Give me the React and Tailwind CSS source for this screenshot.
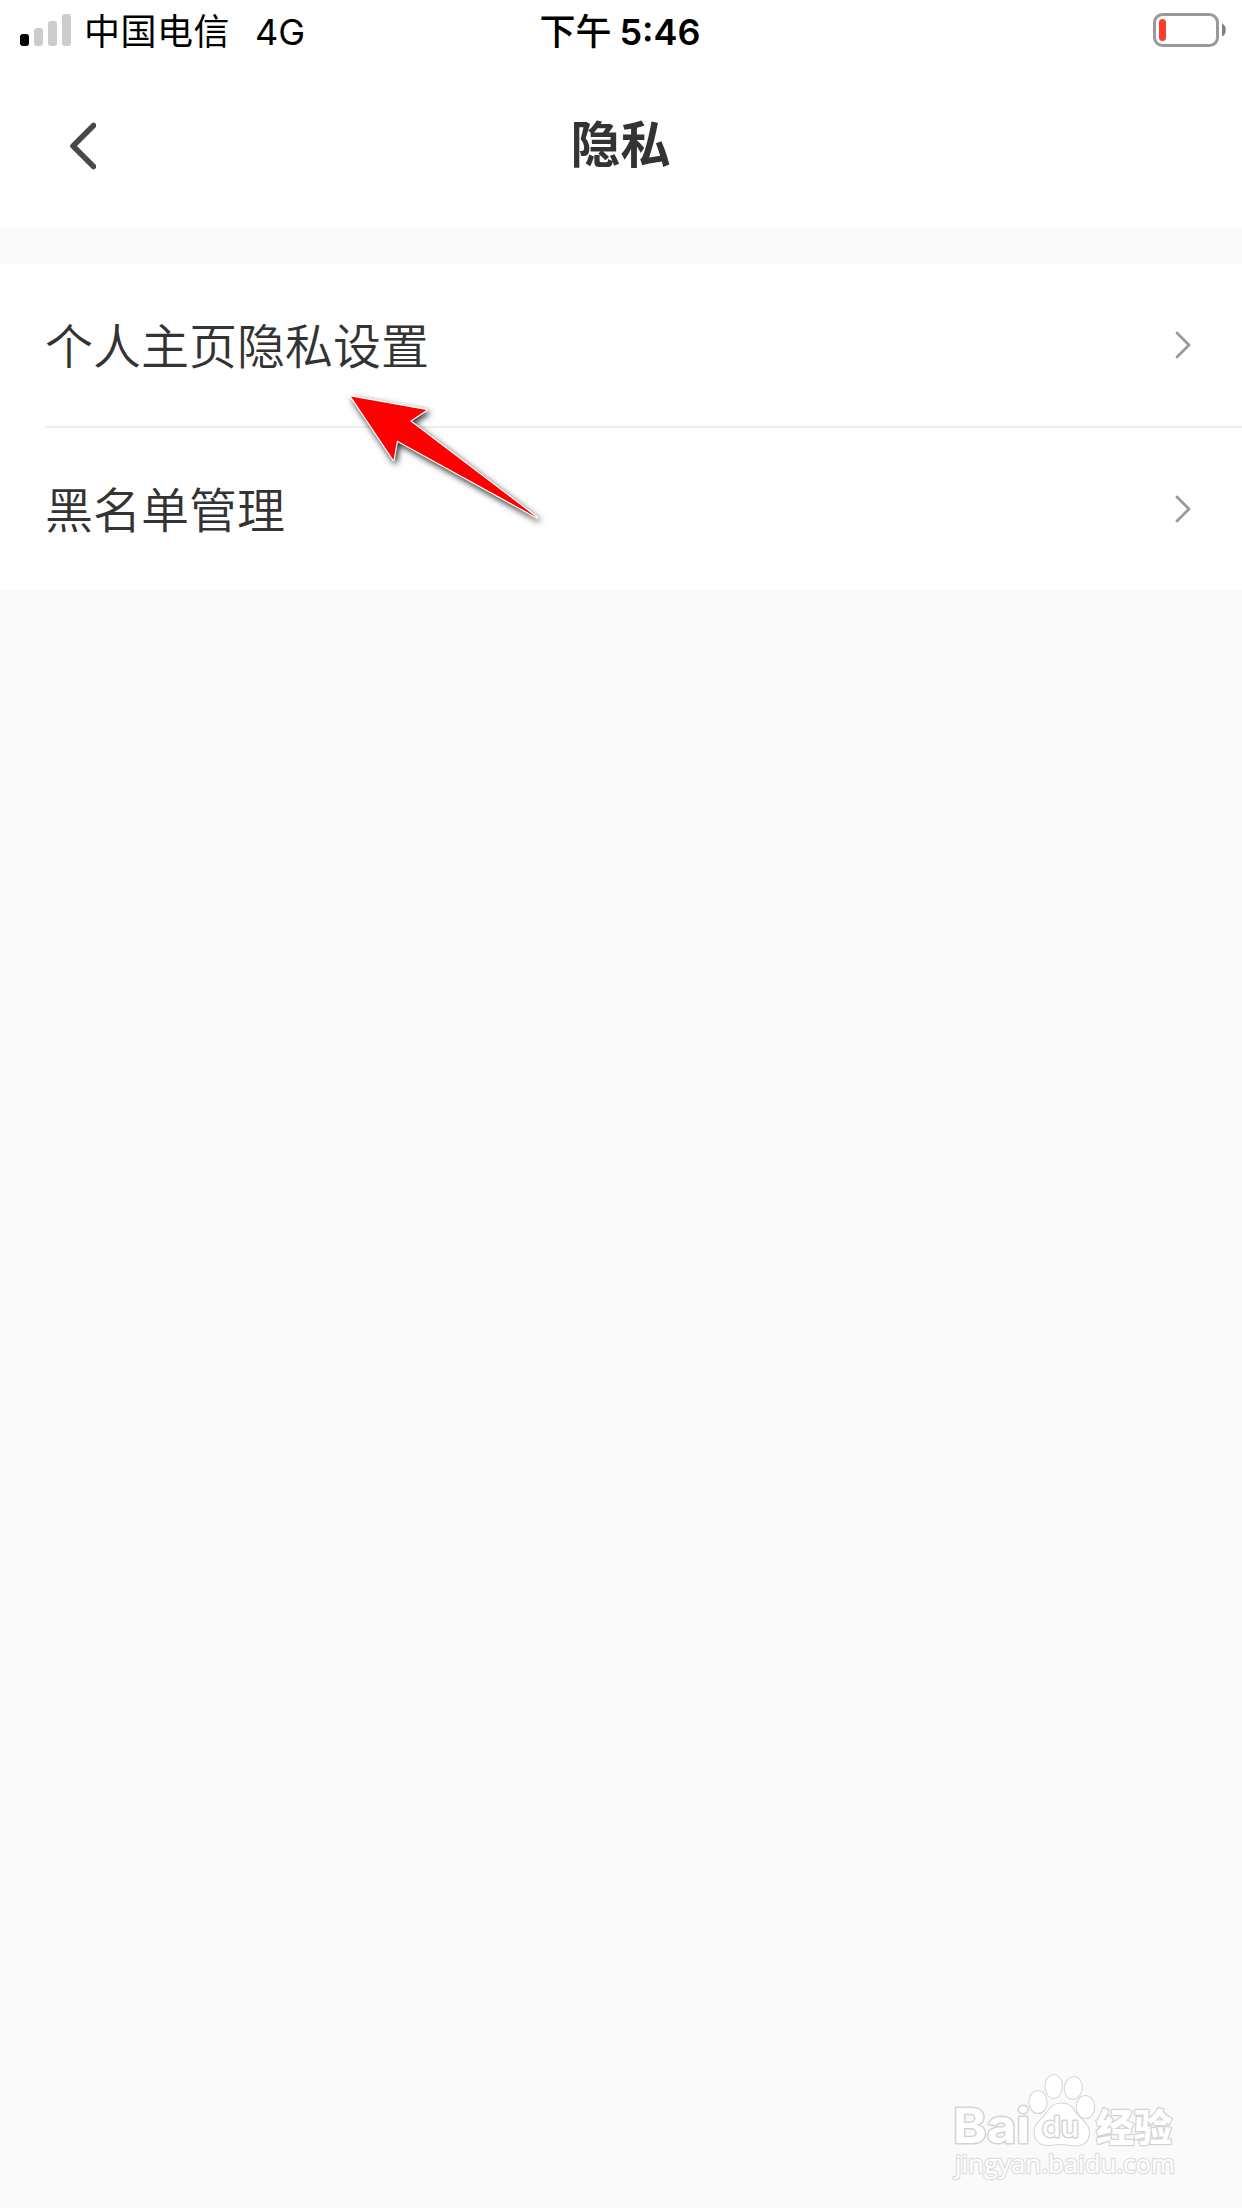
import React from 'react';

const menuItems = [
  { id: 'profile', label: '个人主页隐私设置' },
  { id: 'blacklist', label: '黑名单管理' },
];

const SignalIcon = () => (
  <svg width="51" height="32" viewBox="0 0 51 32">
    <rect x="0" y="20" width="9" height="12" rx="3" fill="#000" />
    <rect x="14" y="14" width="9" height="18" rx="3" fill="#ccc" />
    <rect x="28" y="7" width="9" height="25" rx="3" fill="#ccc" />
    <rect x="42" y="0" width="9" height="32" rx="3" fill="#ccc" />
  </svg>
);

const BatteryIcon = () => (
  <svg width="74" height="34" viewBox="0 0 74 34">
    <rect x="1.5" y="1.5" width="63" height="31" rx="8" fill="none" stroke="#999" strokeWidth="3" />
    <rect x="6" y="6" width="7" height="22" rx="3.5" fill="#ff3b30" />
    <path d="M69 10.5c5 2 5 11 0 13z" fill="#808080" />
  </svg>
);

const StatusBar = () => (
  <div className="grid h-[60px] grid-cols-3 items-center pr-[15px] pl-5 text-[36px] leading-[56px] text-black">
    <div className="flex items-center">
      <SignalIcon />
      <span className="ml-[13px] pt-1 tracking-[0.5px]">中国电信</span>
      <span className="ml-[25px] pt-[3px]">4G</span>
    </div>
    <div className="pt-[3px] pr-[7px] text-center font-semibold whitespace-nowrap">
      <span className="font-medium">下午</span>
      <span className="ml-2">5:46</span>
    </div>
    <div className="flex justify-end">
      <BatteryIcon />
    </div>
  </div>
);

const Header = () => (
  <div className="grid h-[168px] grid-cols-3 items-start px-[69px] pt-14">
    <button className="flex h-[59px] items-center" aria-label="返回">
      <svg width="27" height="48" viewBox="0 0 27 48" fill="none">
        <path d="M24.5 3.5L4 24l20.5 20.5" stroke="#484848" strokeWidth="5.5" strokeLinecap="round" strokeLinejoin="round" />
      </svg>
    </button>
    <h1 className="pr-px text-center text-[50px] leading-[58px] font-bold text-[#333]">隐私</h1>
  </div>
);

const MenuRow = ({ label, divider }) => (
  <div className="pl-[45px]">
    <div
      className={`flex items-center justify-between pr-[51px] ${
        divider ? 'h-[164px] border-b-2 border-[#eee]' : 'h-[162px]'
      }`}
    >
      <span className="pt-[3px] text-[48px] leading-[60px] font-[350] text-[#333]">{label}</span>
      <svg width="16" height="28" viewBox="0 0 16 28" fill="none">
        <path d="M2 2l12 12L2 26" stroke="#999" strokeWidth="2.8" strokeLinecap="round" strokeLinejoin="round" />
      </svg>
    </div>
  </div>
);

const PointerArrow = () => (
  <svg className="absolute top-[380px] left-[330px]" width="230" height="160" viewBox="330 380 230 160">
    <path
      className="drop-shadow-[2px_3px_3px_rgba(0,0,0,0.8)]"
      d="M351 396.5L426.5 410 410 421 537 517.5 397 440.5 393.5 460z"
      fill="#f00"
      stroke="#fff"
      strokeWidth="2.4"
      strokeLinejoin="round"
      paintOrder="stroke"
    />
  </svg>
);

const Watermark = () => (
  <svg
    className="absolute top-[2050px] left-[930px]"
    width="270"
    height="150"
    viewBox="0 0 270 150"
    fill="#fff"
    stroke="#d4d4d4"
    strokeWidth="2"
    strokeLinejoin="round"
    paintOrder="stroke"
  >
    <text x="23" y="93" fontFamily="Inter, sans-serif" fontWeight="700" fontSize="48" textLength="77" lengthAdjust="spacingAndGlyphs" strokeWidth="3">Bai</text>
    <ellipse cx="108" cy="52" rx="8.7" ry="11" />
    <ellipse cx="123.7" cy="36.5" rx="8.2" ry="11.5" />
    <ellipse cx="143.3" cy="38" rx="8.5" ry="11" transform="rotate(10 143.3 38)" />
    <ellipse cx="155.5" cy="57" rx="8.7" ry="11" />
    <path d="M131.5 53.5c-8 0-12 5-15 10-3 5-12 9-12 19 0 8 6 12.5 13 12.5 5 0 9-1 14-1s9 1.5 14 1.5c8 0 13.5-5 13.5-13 0-9-9-13-13-19-3-5-6-10-14.500-10z" />
    <text x="112" y="87" fontFamily="Inter, sans-serif" fontSize="29" fontWeight="500" textLength="37" lengthAdjust="spacingAndGlyphs" strokeWidth="3">du</text>
    <text x="166" y="91" fontFamily="'Noto Sans CJK SC', sans-serif" fontSize="38" fontWeight="900" textLength="76" lengthAdjust="spacingAndGlyphs" strokeWidth="2.5">经验</text>
    <text x="25" y="123" fontFamily="'Open Sans', sans-serif" fontSize="26" textLength="220" lengthAdjust="spacingAndGlyphs" strokeWidth="2.5" stroke="#dedede">jingyan.baidu.com</text>
  </svg>
);

const App = () => {
  return (
    <div className="relative min-h-[2208px] w-full overflow-hidden bg-[#fafafa] font-[Inter,'Noto_Sans_CJK_SC',sans-serif]">
      <div className="bg-white">
        <StatusBar />
        <Header />
      </div>
      <div className="mt-9 bg-white">
        {menuItems.map((item, index) => (
          <MenuRow key={item.id} label={item.label} divider={index < menuItems.length - 1} />
        ))}
      </div>
      <PointerArrow />
      <Watermark />
    </div>
  );
};

export default App;
